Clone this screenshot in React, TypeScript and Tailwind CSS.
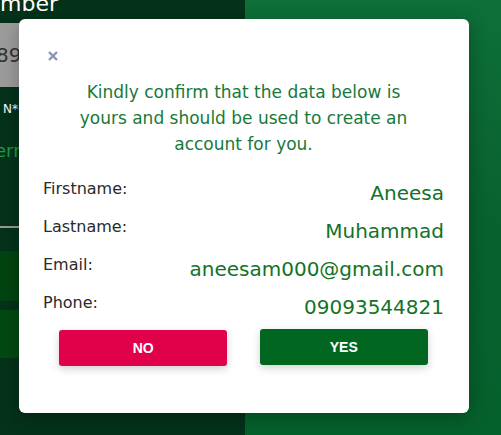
const ROWS = [
  { label: "Firstname:", value: "Aneesa" },
  { label: "Lastname:", value: "Muhammad" },
  { label: "Email:", value: "aneesam000@gmail.com" },
  { label: "Phone:", value: "09093544821" },
];

export default function App() {
  return (
    <div className="relative h-[435px] w-[501px] overflow-hidden bg-[#0a6a35] font-['DejaVu_Sans',sans-serif]">
      {/* ---------- page behind the modal ---------- */}
      <div className="flex h-full">
        <div className="flex w-[245px] shrink-0 flex-col bg-[#04321a]">
          <p className="-mt-[9px] text-[22px] leading-[26px] text-white">mber</p>
          <div className="mt-[6px] flex h-[64px] items-center bg-gradient-to-r from-[#9c9c9c] to-[#c4c4c4] text-[20px] text-[#333]">
            <span className="-ml-[4px]">893</span>
          </div>
          <p className="mt-[13px] pl-[3px] text-[12px] text-white">N*(</p>
          <p className="mt-[19px] text-[18px] text-[#1f9c45]">
            <span className="-ml-[5px]">ern</span>
          </p>
          <div className="mt-[62px] h-[2px] w-[30px] bg-[#9a9a9a]" />
          <div className="mt-[23px] h-[50px] bg-[#024410]" />
          <div className="mt-[9px] h-[48px] bg-[#024a12]" />
        </div>
        <div className="flex-1 bg-gradient-to-b from-[#0e7038] via-[#086230] to-[#05612c]" />
      </div>

      {/* ---------- modal ---------- */}
      <div className="absolute left-[19px] top-[19px] h-[394px] w-[450px] rounded-[6px] bg-white pl-[24px] pr-[25px] pt-[32px] shadow-[0_4px_20px_rgba(0,0,0,0.3)]">
        <button className="ml-[5px] flex h-[10px] w-[10px] items-center justify-center text-[#8b93b6]">
          <svg width="10" height="10" viewBox="0 0 10 10">
            <path d="M1 1 L9 9 M9 1 L1 9" stroke="currentColor" strokeWidth="2.4" />
          </svg>
        </button>

        <p className="mx-auto mt-[18px] w-[340px] text-center text-[17px] leading-[26px] text-[#18793a]">
          Kindly confirm that the data below is yours and should be used to create an account for you.
        </p>

        <div className="mt-[22px] flex flex-col gap-[10px]">
          {ROWS.map((r) => (
            <div key={r.label} className="flex items-start justify-between">
              <span className="text-[16px] leading-[20px] text-[#2a2a2a]">{r.label}</span>
              <span className="text-[20px] leading-[28px] text-[#127327]">{r.value}</span>
            </div>
          ))}
        </div>

        <div className="mt-[8px] grid grid-cols-2">
          <button className="mx-auto mt-[1px] h-[36px] w-[168px] rounded-[3px] bg-[#e1004a] font-['Liberation_Sans',sans-serif] text-[14px] font-bold text-white shadow-[0_3px_8px_rgba(0,0,0,0.18)]">
            NO
          </button>
          <button className="mx-auto h-[36px] w-[168px] rounded-[3px] bg-[#01661f] font-['Liberation_Sans',sans-serif] text-[14px] font-bold text-white shadow-[0_3px_8px_rgba(0,0,0,0.18)]">
            YES
          </button>
        </div>
      </div>
    </div>
  );
}
